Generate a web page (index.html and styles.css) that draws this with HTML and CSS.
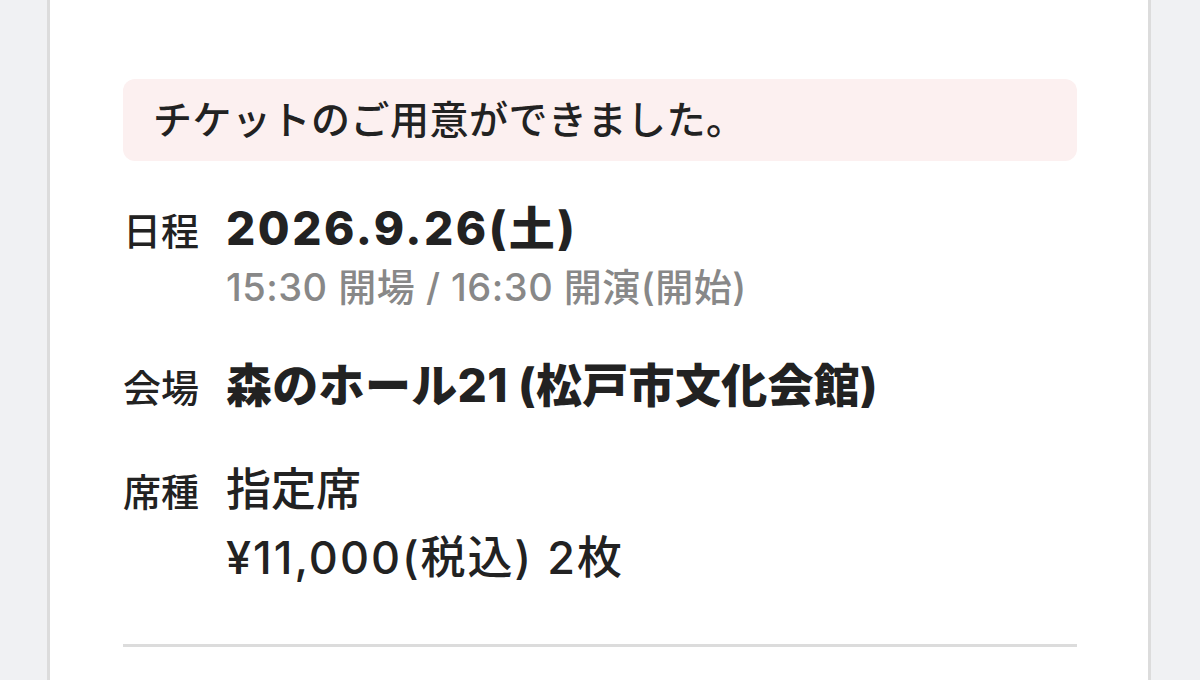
FILE: index.html
```html
<!DOCTYPE html>
<html lang="ja">
<head>
    <meta charset="UTF-8">
    <meta name="viewport" content="width=device-width, initial-scale=1.0">
    <title>チケット情報</title>
    <link rel="stylesheet" href="styles.css">
</head>
<body>
    <div class="card">
        <div class="notice">チケットのご用意ができました。</div>

        <div class="info-row">
            <div class="label">日程</div>
            <div class="value">
                <div class="date">2026.9.26(土)</div>
                <div class="time">15:30 開場 / 16:30 開演(開始)</div>
            </div>
        </div>

        <div class="info-row venue-row">
            <div class="label">会場</div>
            <div class="value">
                <div class="venue">森のホール21 (松戸市文化会館)</div>
            </div>
        </div>

        <div class="info-row seat-row">
            <div class="label">席種</div>
            <div class="value">
                <div class="seat">指定席</div>
                <div class="price">¥11,000(税込) 2枚</div>
            </div>
        </div>

        <hr class="divider">
    </div>
</body>
</html>
```

FILE: styles.css
```css
body {
    margin: 0;
    background: #f0f1f3;
    font-family: "Inter", "Noto Sans CJK JP", sans-serif;
    color: #222;
    height: 680px;
    overflow: hidden;
}
.card {
    box-sizing: border-box;
    width: 1104px;
    height: 680px;
    margin-left: 47px;
    background: #fff;
    border: solid #dcdcdc;
    border-width: 0 3px;
    padding: 79px 71px 0 73px;
}
.notice {
    background: #fcf0f0;
    border-radius: 12px;
    padding: 0 30px;
    height: 82px;
    line-height: 82px;
    font-size: 39px;
    font-weight: 500;
    letter-spacing: 0.5px;
}
.info-row {
    display: grid;
    grid-template-columns: 103px 1fr;
    align-items: baseline;
    margin-top: 40px;
}
.venue-row {
    margin-top: 45px;
}
.seat-row {
    margin-top: 43px;
}
.label {
    font-size: 38px;
    font-weight: 500;
}
.value {
    font-size: 45px;
}
.date,
.venue {
    font-weight: 800;
    line-height: 54px;
}
.date {
    font-size: 46px;
    letter-spacing: 2.5px;
}
.venue {
    font-size: 46px;
    letter-spacing: 0.3px;
}
.time {
    margin-top: 6px;
    font-size: 38px;
    font-weight: 500;
    color: #888;
    line-height: 52px;
    letter-spacing: 0.5px;
}
.seat,
.price {
    font-weight: 500;
    line-height: 68px;
}
.price {
    letter-spacing: 2px;
}
.divider {
    border: none;
    height: 3px;
    background: #dcdcdc;
    margin: 52px 0 0;
}
```
